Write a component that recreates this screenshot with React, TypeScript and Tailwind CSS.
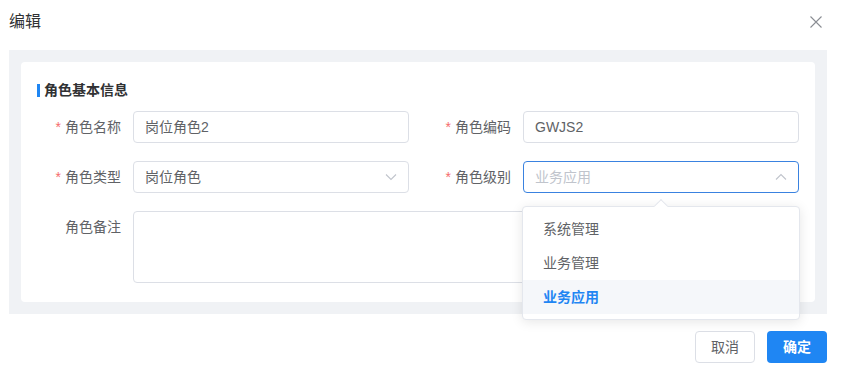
import React from "react";

const font = { fontFamily: '"Liberation Sans", "Noto Sans CJK SC", sans-serif' };

function Label({ text, required = true }: { text: string; required?: boolean }) {
  return (
    <div className="w-[96px] shrink-0 pr-[12px] flex items-center justify-end h-[32px] text-[14px] text-[#606266]">
      {required && <span className="text-[#f56c6c] mr-[4px] text-[14px]">*</span>}
      <span>{text}</span>
    </div>
  );
}

function Chevron({ up = false }: { up?: boolean }) {
  return (
    <svg width="14" height="14" viewBox="0 0 14 14" fill="none" stroke="#c0c4cc" strokeWidth="1.1">
      {up ? <path d="M2 9.5 L7 4.5 L12 9.5" /> : <path d="M2 4.5 L7 9.5 L12 4.5" />}
    </svg>
  );
}

export default function App() {
  return (
    <div className="relative w-[842px] h-[375px] bg-white overflow-hidden" style={font}>
      {/* header */}
      <div className="h-[44px] flex items-center justify-between pl-[9px] pr-[19px]">
        <span className="text-[16px] text-[#303133]">编辑</span>
        <svg width="14" height="14" viewBox="0 0 14 14" stroke="#8a8d93" strokeWidth="1.1" fill="none">
          <path d="M1.5 1.5 L12.5 12.5 M12.5 1.5 L1.5 12.5" />
        </svg>
      </div>
      {/* body */}
      <div className="mt-[6px] mx-[9px] w-[818px] bg-[#f0f2f5] p-[12px]">
        <div className="bg-white rounded-[4px] px-[16px] pt-[18px] pb-[19px]">
          <div className="h-[20px] flex items-center mb-[11px]">
            <span className="w-[3px] h-[13px] bg-[#1f86f3] mr-[4px]" />
            <span className="text-[14px] font-bold text-[#303133]">角色基本信息</span>
          </div>
          <div className="grid grid-cols-2 gap-x-[18px] gap-y-[18px]">
            <div className="flex">
              <Label text="角色名称" />
              <div className="flex-1 h-[32px] border border-[#dcdfe6] rounded-[4px] px-[11px] flex items-center text-[14px] text-[#606266]">
                岗位角色2
              </div>
            </div>
            <div className="flex">
              <Label text="角色编码" />
              <div className="flex-1 h-[32px] border border-[#dcdfe6] rounded-[4px] px-[11px] flex items-center text-[14px] text-[#606266]">
                GWJS2
              </div>
            </div>
            <div className="flex">
              <Label text="角色类型" />
              <div className="flex-1 h-[32px] border border-[#dcdfe6] rounded-[4px] pl-[11px] pr-[10px] flex items-center justify-between text-[14px] text-[#606266]">
                <span>岗位角色</span>
                <Chevron />
              </div>
            </div>
            <div className="flex">
              <Label text="角色级别" />
              <div className="flex-1 h-[32px] border border-[#3a82e0] rounded-[4px] pl-[11px] pr-[10px] flex items-center justify-between text-[14px] text-[#c0c4cc]">
                <span>业务应用</span>
                <Chevron up />
              </div>
            </div>
            <div className="flex col-span-2">
              <div className="w-[96px] shrink-0 pr-[12px] flex justify-end h-[32px] items-center text-[14px] text-[#606266]">
                角色备注
              </div>
              <div className="flex-1 h-[72px] border border-[#dcdfe6] rounded-[4px]" />
            </div>
          </div>
        </div>
      </div>
      {/* footer */}
      <div className="mt-[17px] flex justify-end gap-[12px] pr-[15px]">
        <button className="w-[60px] h-[32px] border border-[#dcdfe6] rounded-[4px] bg-white text-[14px] text-[#606266] flex items-center justify-center">
          取消
        </button>
        <button className="w-[60px] h-[32px] rounded-[4px] bg-[#1f86f3] text-[14px] text-white font-bold flex items-center justify-center">
          确定
        </button>
      </div>
      {/* dropdown */}
      <div className="absolute left-[522px] top-[206px] w-[278px] h-[114px] bg-white border border-[#e4e7ed] rounded-[4px] shadow-[0_2px_12px_rgba(0,0,0,0.1)] py-[5px]">
        <div className="absolute left-[133px] top-[-6px] w-[10px] h-[10px] bg-white border-l border-t border-[#e4e7ed] rotate-45" />
        <div className="h-[34px] flex items-center pl-[20px] text-[14px] text-[#606266]">系统管理</div>
        <div className="h-[34px] flex items-center pl-[20px] text-[14px] text-[#606266]">业务管理</div>
        <div className="h-[34px] flex items-center pl-[20px] text-[14px] text-[#1f86f3] font-bold bg-[#f5f7fa]">业务应用</div>
      </div>
    </div>
  );
}
